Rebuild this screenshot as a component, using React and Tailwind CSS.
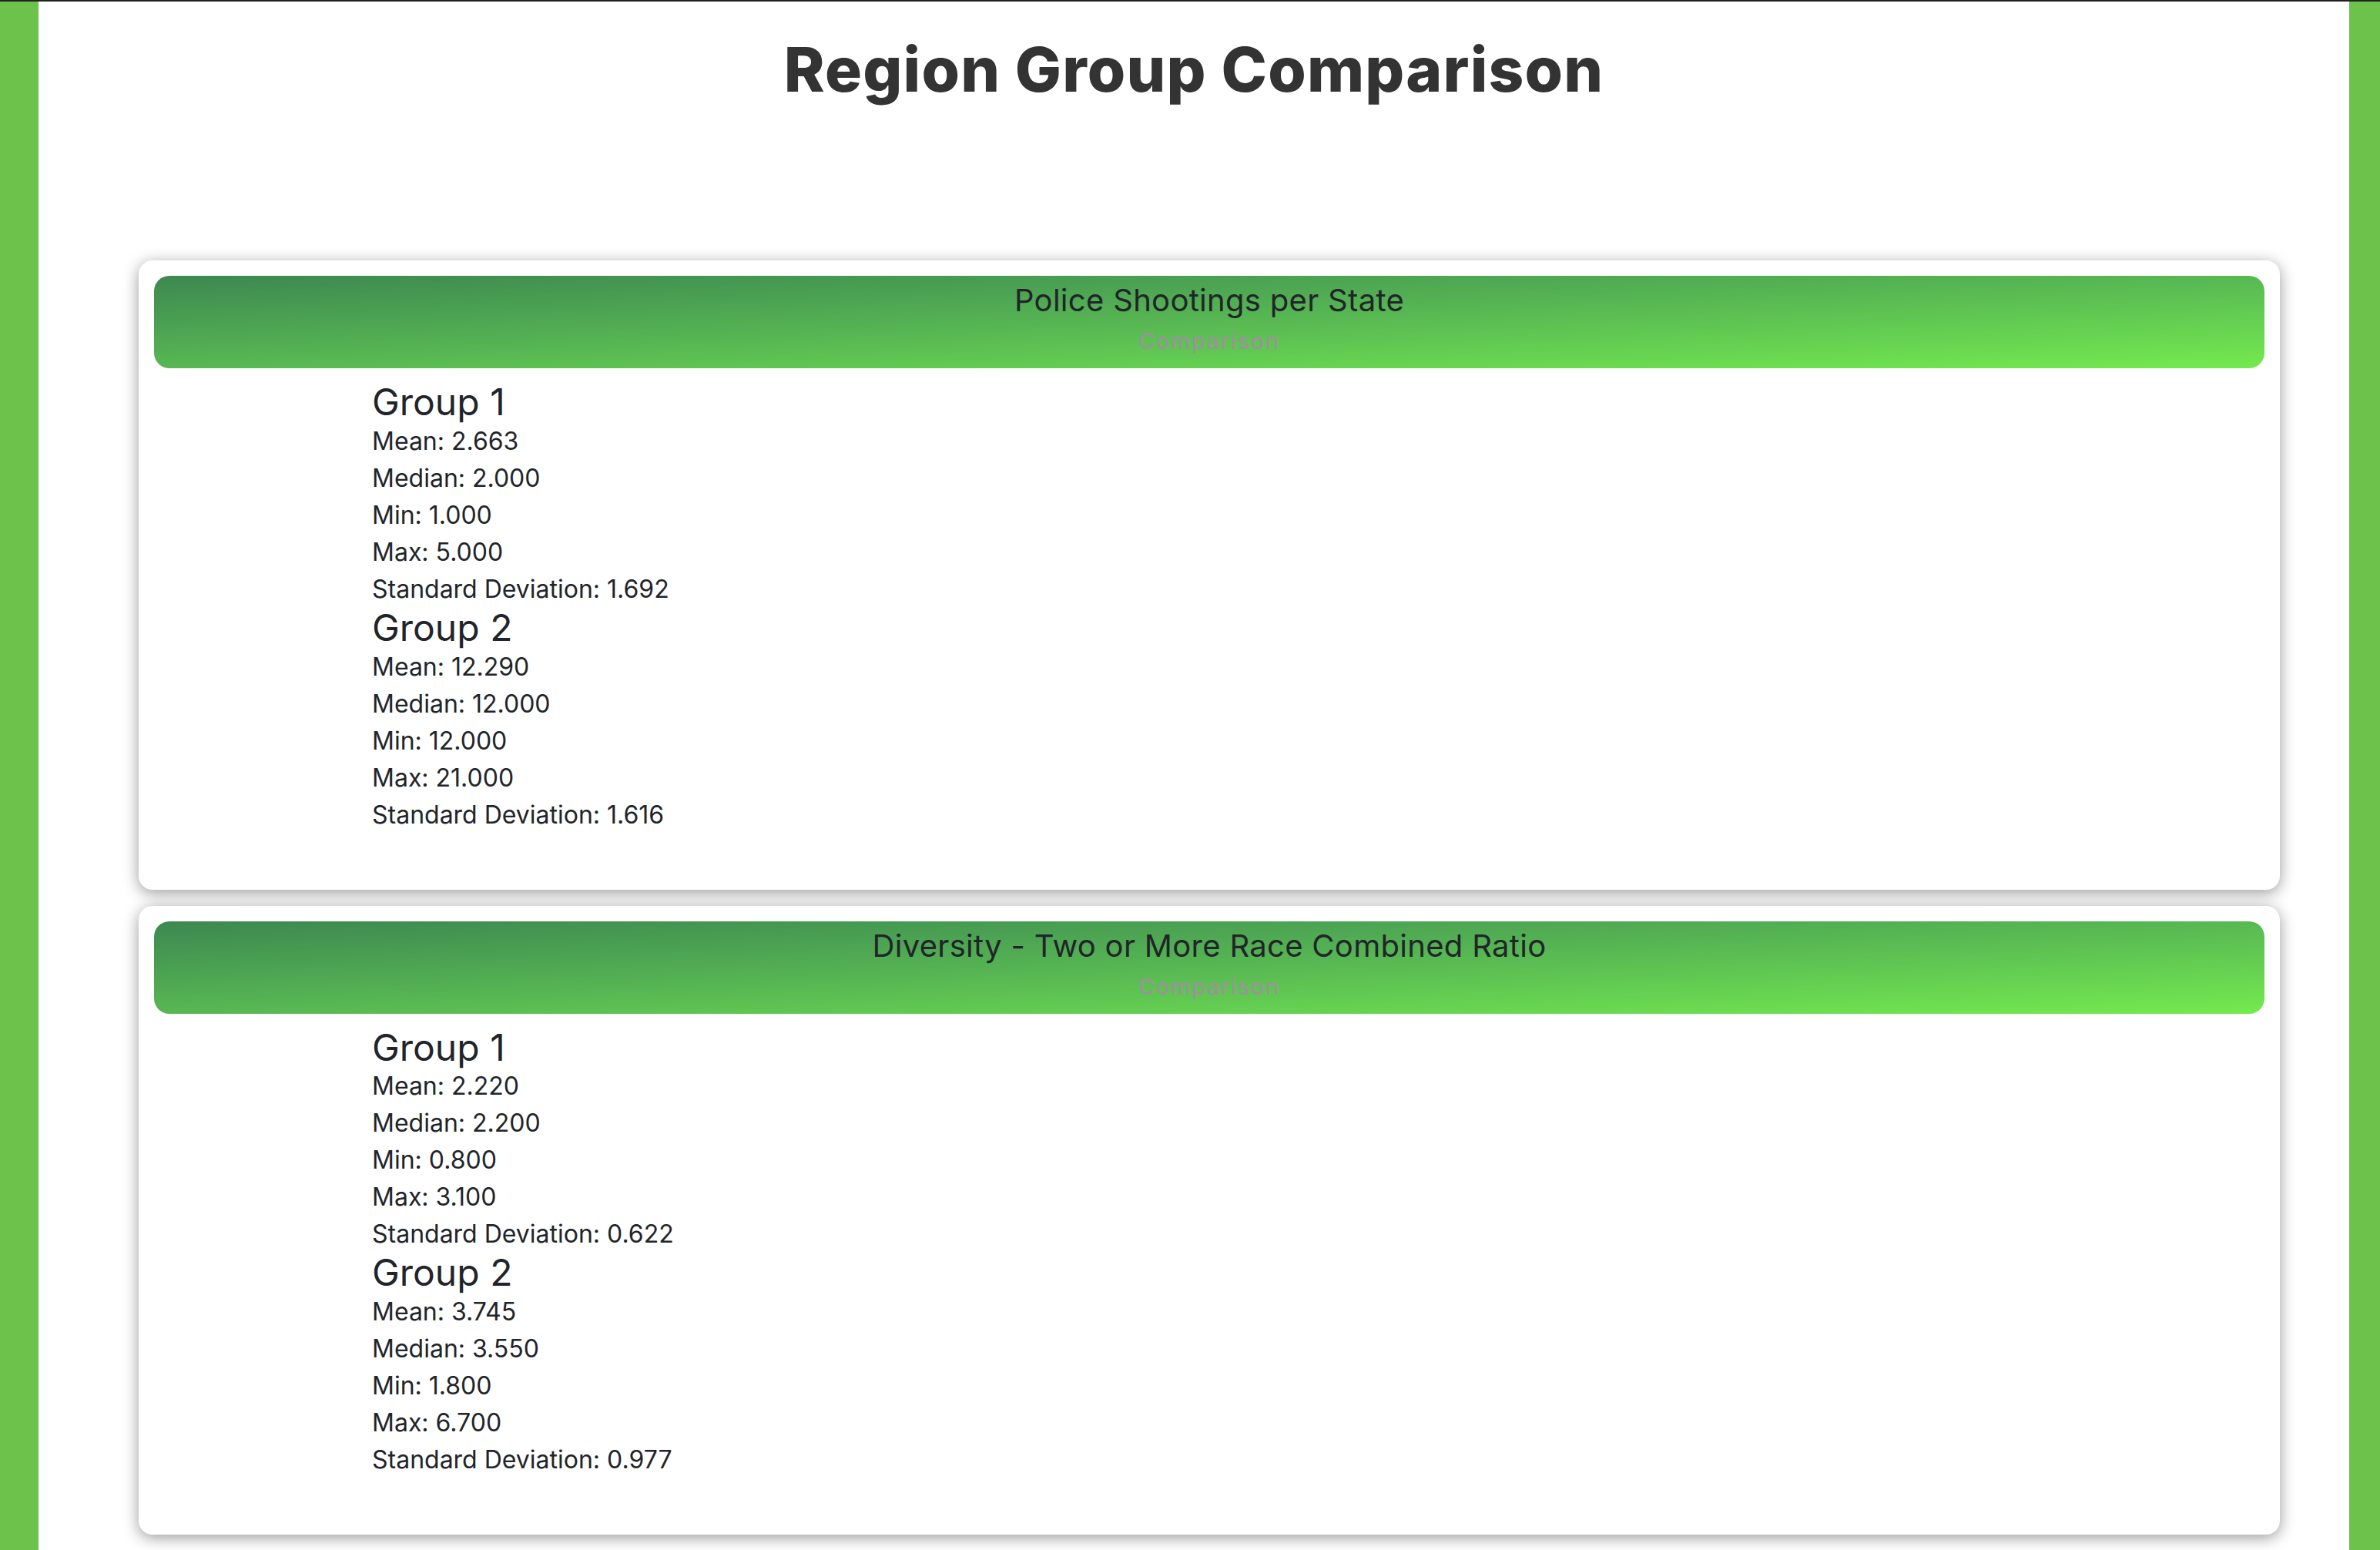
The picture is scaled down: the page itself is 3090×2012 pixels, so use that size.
import React from "react";

const sections = [
  {
    title: "Police Shootings per State",
    groups: [
      { name: "Group 1", mean: "2.663", median: "2.000", min: "1.000", max: "5.000", sd: "1.692" },
      { name: "Group 2", mean: "12.290", median: "12.000", min: "12.000", max: "21.000", sd: "1.616" },
    ],
  },
  {
    title: "Diversity - Two or More Race Combined Ratio",
    groups: [
      { name: "Group 1", mean: "2.220", median: "2.200", min: "0.800", max: "3.100", sd: "0.622" },
      { name: "Group 2", mean: "3.745", median: "3.550", min: "1.800", max: "6.700", sd: "0.977" },
    ],
  },
];

function GroupStats({ group }) {
  return (
    <div>
      <h4 className="text-[48px] leading-[52.8px] font-normal">{group.name}</h4>
      <p className="text-[32px] leading-[48px]">Mean: {group.mean}</p>
      <p className="text-[32px] leading-[48px]">Median: {group.median}</p>
      <p className="text-[32px] leading-[48px]">Min: {group.min}</p>
      <p className="text-[32px] leading-[48px]">Max: {group.max}</p>
      <p className="text-[32px] leading-[48px]">Standard Deviation: {group.sd}</p>
    </div>
  );
}

function ComparisonCard({ section }) {
  return (
    <div className="rounded-[18px] bg-white p-[20px] pb-[73px] shadow-[0_4px_20px_rgba(0,0,0,0.4)]">
      <div className="h-[120px] rounded-[20px] bg-linear-to-br from-[#3d8850] to-[#74ea4e] pt-[8px] text-center">
        <h5 className="text-[40px] leading-[48px] tracking-[0.3px] text-[#212529]">{section.title}</h5>
        <p className="mt-[8px] text-[29px] leading-[42px] font-medium tracking-[1.5px] text-[#9a9498]">
          Comparison
        </p>
      </div>
      <div className="mt-[18px] pl-[283px] text-[#212529]">
        {section.groups.map((g) => (
          <GroupStats key={g.name} group={g} />
        ))}
      </div>
    </div>
  );
}

export default function App() {
  return (
    <div className="min-h-screen border-t-2 border-[#222] bg-[#6cc24a] pl-[50px] pr-[40px] font-['Inter',sans-serif]">
      <div className="min-h-screen bg-white pb-[40px]">
        <h1 className="pt-[40px] text-center text-[80px] leading-[96px] font-extrabold tracking-[1.2px] text-[#333]">
          Region Group Comparison
        </h1>
        <div className="mt-[200px] flex flex-col gap-[21px] pl-[130px] pr-[90px]">
          {sections.map((s) => (
            <ComparisonCard key={s.title} section={s} />
          ))}
        </div>
      </div>
    </div>
  );
}
